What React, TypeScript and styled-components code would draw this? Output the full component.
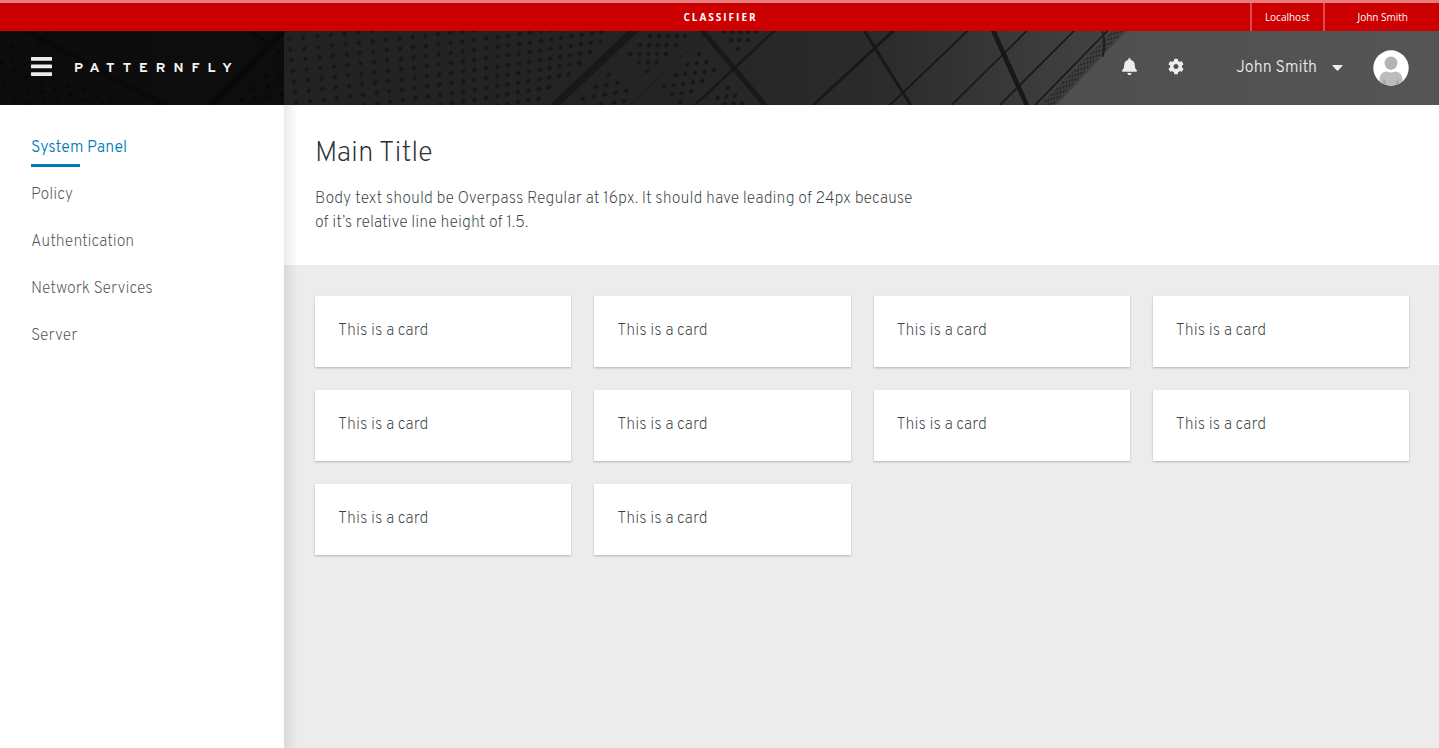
import React from "react";
import styled, { createGlobalStyle } from "styled-components";

const GlobalStyle = createGlobalStyle`
  *, *::before, *::after { box-sizing: border-box; }
  body {
    margin: 0;
    background: #ececec;
    color: #393f44;
    font-family: Overpass, Roboto, "Liberation Sans", sans-serif;
    font-size: 16px;
    font-weight: 200;
    line-height: 24px;
  }
  button { font: inherit; color: inherit; }
`;

const Page = styled.div`
  display: flex;
  flex-direction: column;
  min-height: 100vh;
`;

const Banner = styled.div`
  display: grid;
  grid-template-columns: 1fr auto 1fr;
  height: 31px;
  border-top: 3px solid #e57f7f;
  background: #cc0000;
  color: #fff;
  font-family: "Open Sans", sans-serif;
  font-size: 10px;
  font-weight: 400;
  line-height: 28px;
`;

const BannerLabel = styled.strong`
  grid-column: 2;
  padding-left: 2px;
  font-weight: 700;
  letter-spacing: 2px;
`;

const BannerMeta = styled.div`
  display: flex;
  justify-content: flex-end;
`;

const BannerItem = styled.span<{ $wide?: boolean }>`
  padding: ${(p) => (p.$wide ? "0 31px 0 32px" : "0 14px 0 13px")};
  border-left: 2px solid #db4d4d;
`;

const Masthead = styled.header`
  position: relative;
  display: flex;
  height: 74px;
  background: #222;
  color: #ededed;
`;

const Backdrop = styled.svg`
  position: absolute;
  inset: 0;
  width: 100%;
  height: 100%;
`;

const Brand = styled.div`
  position: relative;
  display: flex;
  align-items: center;
  gap: 22px;
  width: 284px;
  padding-left: 31px;
  background: rgba(0, 0, 0, 0.62);
`;

const IconButton = styled.button`
  display: flex;
  padding: 0 0 3px;
  border: 0;
  background: none;
  cursor: pointer;
`;

const Logo = styled.a`
  padding-top: 2px;
  color: #f5f5f5;
  font-family: Overpass, Lato, sans-serif;
  font-size: 14px;
  font-weight: 700;
  letter-spacing: 8px;
  text-decoration: none;
`;

const Tools = styled.div`
  position: relative;
  display: flex;
  flex: 1;
  align-items: center;
  justify-content: flex-end;
  padding-right: 30px;
`;

const IconGroup = styled.div`
  display: flex;
  gap: 31px;
  margin-right: 52px;
`;

const UserButton = styled.button`
  display: flex;
  align-items: center;
  gap: 15px;
  margin-right: 30px;
  padding: 0;
  border: 0;
  background: none;
  font-weight: 300;
  cursor: pointer;
`;

const Body = styled.div`
  display: flex;
  flex: 1;
`;

const Sidebar = styled.nav`
  flex: none;
  width: 284px;
  padding: 31px;
  background: #fff;
`;

const NavList = styled.ul`
  display: flex;
  flex-direction: column;
  gap: 16px;
  margin: 0;
  padding: 0;
  list-style: none;
`;

const NavLink = styled.a<{ $current?: boolean }>`
  position: relative;
  display: block;
  height: 31px;
  color: ${(p) => (p.$current ? "#007bba" : "#4d5258")};
  font-weight: ${(p) => (p.$current ? 300 : 200)};
  text-decoration: none;

  &::after {
    content: "";
    position: absolute;
    bottom: 0;
    left: 0;
    width: 49px;
    height: 3px;
    background: ${(p) => (p.$current ? "#007bba" : "transparent")};
  }
`;

const Content = styled.main`
  position: relative;
  flex: 1;

  &::before {
    content: "";
    position: absolute;
    inset: 0 auto 0 0;
    width: 14px;
    background: linear-gradient(to right, rgba(0, 0, 0, 0.08), rgba(0, 0, 0, 0));
  }
`;

const Intro = styled.section`
  padding: 34px 31px 30px;
  background: #fff;
`;

const Title = styled.h1`
  margin: 0 0 18px;
  color: #292e34;
  font-size: 28px;
  font-weight: 200;
  line-height: 30px;
`;

const Lead = styled.p`
  max-width: 604px;
  margin: 0;
`;

const Cards = styled.section`
  display: grid;
  grid-template-columns: repeat(4, 1fr);
  gap: 23px;
  padding: 31px 30px 31px 31px;
`;

const Card = styled.article`
  padding: 23px 23px 24px;
  background: #fff;
  box-shadow: 0 1px 2px rgba(3, 3, 3, 0.25);
`;

type Point = [number, number];

/* The photo is drawn in units of a third of a pixel. */
const columns = [
  31, 73, 115, 156, 197, 237, 278, 318, 358, 398, 436, 474, 511, 547, 582, 618, 653, 685, 719, 752,
  785, 816, 847, 878, 909, 940, 970,
];

const screenDots: Point[] = columns.flatMap((x, c) =>
  Array.from({ length: 12 }, (_, i): Point => {
    const row = i - 2;
    const pitch = 32 - c * 0.16;
    return [x + row * (3.6 - c * 0.24), 149 - c * 4.2 + row * pitch];
  }).filter(([px, py]) => px + py * 1.03 < 1097 && py > 88),
);

const panelDots: Point[] = [
  [240, 109], [267, 109], [293, 109], [320, 109], [345, 109],
  [210, 135], [237, 135], [263, 134], [290, 135], [317, 135],
  [181, 162], [209, 162], [235, 161], [261, 161], [288, 161],
  [207, 188], [234, 187], [260, 187], [232, 213],
  [387, 161], [352, 194], [381, 190], [409, 186],
  [317, 226], [346, 222], [375, 218], [403, 215], [431, 211],
  [282, 259], [311, 255], [340, 251], [369, 247], [397, 243],
  [306, 282], [335, 278], [364, 274], [331, 306],
  [116, 224], [77, 260], [109, 254], [142, 248],
  [39, 296], [72, 290], [104, 284], [137, 278], [169, 272],
  [94, 312], [132, 308], [162, 303],
  [474, 264], [443, 293], [469, 290], [495, 287], [465, 312], [490, 311], [516, 310],
  [463, 95], [487, 95], [511, 95], [535, 95], [559, 95],
  [483, 120], [508, 120], [533, 120], [503, 146],
];

const cornerDots: Point[] = [
  [5, 187], [36, 140], [38, 175], [42, 210], [75, 195], [80, 232], [10, 255], [44, 294], [48, 258],
  [85, 280], [118, 220], [122, 250], [127, 275], [88, 310], [132, 304], [160, 240], [165, 268],
  [172, 296], [205, 256], [210, 283], [216, 308], [250, 270], [256, 298], [292, 290], [330, 304],
  [838, 190], [840, 222], [800, 230], [804, 260], [842, 254], [760, 265], [766, 294], [808, 292],
  [724, 302], [844, 286], [836, 158],
];

const beams: [number, number, number, number, number][] = [
  [1900, 93, 1665, 315, 22],
  [2110, 108, 1890, 315, 2],
  [2108, 93, 2295, 315, 15],
  [2322, 93, 2085, 315, 7],
  [2680, 93, 2440, 315, 9],
  [2593, 93, 2732, 315, 9],
  [2902, 93, 2670, 315, 6],
  [2980, 93, 3080, 315, 14],
  [3080, 93, 2855, 315, 5],
  [3222, 93, 3000, 315, 5],
  [3322, 93, 3105, 315, 5],
  [80, 93, 490, 315, 16],
  [150, 93, 115, 128, 10],
  [850, 93, 635, 315, 20],
  [755, 93, 800, 128, 10],
];

const Dots = ({ points, dx = 0 }: { points: Point[]; dx?: number }) => (
  <g transform={`translate(${dx} 0)`} fill="#171717">
    {points.map(([x, y], i) => (
      <ellipse key={i} cx={x} cy={y} rx={7} ry={6} transform={`rotate(-35 ${x} ${y})`} />
    ))}
  </g>
);

const HeaderPhoto = () => (
  <Backdrop viewBox="0 93 4317 222" preserveAspectRatio="xMidYMid slice" aria-hidden="true">
    <defs>
      <linearGradient id="roof" gradientUnits="userSpaceOnUse" x1="0" y1="0" x2="3300" y2="0">
        <stop offset="0" stopColor="#212121" />
        <stop offset="0.6" stopColor="#242424" />
        <stop offset="0.8" stopColor="#2b2b2b" />
        <stop offset="1" stopColor="#424242" />
      </linearGradient>
      <linearGradient id="sky" x1="0" y1="0" x2="1" y2="0">
        <stop offset="0" stopColor="#4f4f4f" />
        <stop offset="1" stopColor="#555" />
      </linearGradient>
      <pattern id="mesh" width="9" height="13" patternUnits="userSpaceOnUse" patternTransform="skewY(-16)">
        <ellipse cx="4" cy="6" rx="3" ry="5" fill="#262626" />
      </pattern>
    </defs>
    <rect x="0" y="93" width="4317" height="222" fill="url(#roof)" />
    <Dots points={screenDots} dx={840} />
    <Dots points={panelDots} dx={1710} />
    <Dots points={cornerDots} />
    <path d="M1835 165L1980 312" stroke="#1c1c1c" strokeWidth={2} />
    {beams.map(([x1, y1, x2, y2, w], i) => (
      <line key={i} x1={x1} y1={y1} x2={x2} y2={y2} stroke="#181818" strokeWidth={w} strokeLinecap="square" />
    ))}
    <path d="M3336 93H3372L3160 315H3120Z" fill="url(#mesh)" />
    <path d="M3380 93H4317V315H3170Z" fill="url(#sky)" />
    <path d="M3307 93Q3318 130 3308 170" fill="none" stroke="#1f1f1f" strokeWidth={6} />
  </Backdrop>
);

const MenuIcon = () => (
  <svg width="21" height="19" viewBox="0 0 21 19" fill="#ededed" aria-hidden="true">
    <rect width="21" height="3.700" rx="0.600" y="0" />
    <rect width="21" height="3.700" rx="0.600" y="7.600" />
    <rect width="21" height="3.700" rx="0.600" y="15.200" />
  </svg>
);

const BellIcon = () => (
  <svg width="15" height="17" viewBox="0 0 448 512" fill="currentColor" aria-hidden="true">
    <path d="M224 512c35.320 0 63.970-28.650 63.970-64H160.030c0 35.350 28.650 64 63.970 64zm215.390-149.710c-19.320-20.760-55.470-51.990-55.470-154.290 0-77.700-54.480-139.900-127.940-155.160V32c0-17.670-14.320-32-31.980-32s-31.980 14.330-31.980 32v20.840C118.560 68.100 64.080 130.300 64.080 208c0 102.300-36.150 133.530-55.470 154.290-6 6.450-8.660 14.160-8.610 21.710.11 16.400 12.980 32 32.100 32h383.800c19.120 0 32-15.600 32.100-32 .05-7.550-2.610-15.270-8.610-21.710z" />
  </svg>
);

const CogIcon = () => (
  <svg width="16" height="17" viewBox="0 0 512 512" fill="currentColor" aria-hidden="true">
    <path d="M487.400 315.700l-42.600-24.600c4.300-23.200 4.300-47 0-70.200l42.600-24.600c4.900-2.800 7.100-8.600 5.500-14-11.100-35.600-30-67.800-54.700-94.600-3.800-4.100-10-5.100-14.800-2.300L380.800 110c-17.900-15.400-38.500-27.300-60.800-35.100V25.800c0-5.600-3.900-10.500-9.400-11.700-36.700-8.200-74.300-7.800-109.200 0-5.500 1.200-9.400 6.100-9.400 11.700V75c-22.200 7.900-42.800 19.800-60.800 35.100L88.700 85.500c-4.900-2.800-11-1.900-14.800 2.300-24.700 26.700-43.600 58.900-54.700 94.600-1.700 5.400.6 11.200 5.500 14L67.300 221c-4.300 23.200-4.300 47 0 70.200l-42.600 24.600c-4.900 2.800-7.100 8.600-5.500 14 11.100 35.600 30 67.800 54.700 94.600 3.800 4.100 10 5.100 14.800 2.300l42.600-24.600c17.900 15.400 38.500 27.300 60.800 35.100v49.200c0 5.600 3.900 10.500 9.400 11.700 36.700 8.200 74.300 7.800 109.200 0 5.500-1.200 9.400-6.100 9.400-11.700v-49.200c22.200-7.900 42.800-19.800 60.800-35.100l42.600 24.600c4.900 2.800 11 1.900 14.800-2.300 24.700-26.700 43.600-58.900 54.700-94.600 1.500-5.500-.7-11.300-5.600-14.100zM256 336c-44.100 0-80-35.900-80-80s35.900-80 80-80 80 35.900 80 80-35.900 80-80 80z" />
  </svg>
);

const CaretIcon = () => (
  <svg width="11" height="6" viewBox="0 0 11 6" fill="currentColor" aria-hidden="true">
    <path d="M1 0H10Q11 0 10.400 .8L6.200 5.500Q5.500 6 4.800 5.500L.6 .8Q0 0 1 0Z" />
  </svg>
);

const Avatar = () => (
  <svg width="36" height="36" viewBox="0 0 36 36" role="img" aria-label="John Smith">
    <clipPath id="avatar-clip">
      <circle cx="18" cy="18" r="17.700" />
    </clipPath>
    <circle cx="18" cy="18" r="17.700" fill="#fff" />
    <g clipPath="url(#avatar-clip)">
      <path d="M6.500 36V30C6.500 24.500 10 21.500 14 21.500Q18 23.500 22 21.500C26 21.500 29.500 24.500 29.500 30V36Z" fill="#bcbcbc" />
      <path d="M11 29Q13 30 13 36H10Q10 31 11 29ZM25 29Q23 30 23 36H26Q26 31 25 29Z" fill="#a6a6a6" />
      <circle cx="18" cy="13" r="6.500" fill="#b4b4b4" />
      <path d="M12.500 16.500Q18 21 23.500 16.500Q21.800 19.500 18 19.500T12.500 16.500Z" fill="#a6a6a6" />
    </g>
  </svg>
);

const navItems = ["System Panel", "Policy", "Authentication", "Network Services", "Server"];

export default function App() {
  return (
    <Page>
      <GlobalStyle />
      <Banner>
        <BannerLabel>CLASSIFIER</BannerLabel>
        <BannerMeta>
          <BannerItem>Localhost</BannerItem>
          <BannerItem $wide>John Smith</BannerItem>
        </BannerMeta>
      </Banner>
      <Masthead>
        <HeaderPhoto />
        <Brand>
          <IconButton type="button" aria-label="Toggle navigation">
            <MenuIcon />
          </IconButton>
          <Logo href="#">PATTERNFLY</Logo>
        </Brand>
        <Tools>
          <IconGroup>
            <IconButton type="button" aria-label="Notifications">
              <BellIcon />
            </IconButton>
            <IconButton type="button" aria-label="Settings">
              <CogIcon />
            </IconButton>
          </IconGroup>
          <UserButton type="button" aria-haspopup="menu">
            John Smith
            <CaretIcon />
          </UserButton>
          <Avatar />
        </Tools>
      </Masthead>
      <Body>
        <Sidebar aria-label="Main">
          <NavList>
            {navItems.map((item, i) => (
              <li key={item}>
                <NavLink href="#" $current={i === 0} aria-current={i === 0 ? "page" : undefined}>
                  {item}
                </NavLink>
              </li>
            ))}
          </NavList>
        </Sidebar>
        <Content>
          <Intro>
            <Title>Main Title</Title>
            <Lead>
              Body text should be Overpass Regular at 16px. It should have leading of 24px because of
              it’s relative line height of 1.5.
            </Lead>
          </Intro>
          <Cards>
            {Array.from({ length: 10 }, (_, i) => (
              <Card key={i}>This is a card</Card>
            ))}
          </Cards>
        </Content>
      </Body>
    </Page>
  );
}
